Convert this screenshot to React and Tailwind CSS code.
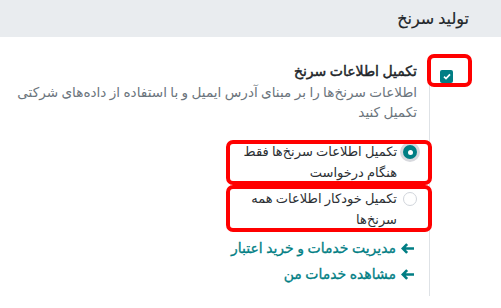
export default function App() {
  const font = "font-['Roboto','DejaVu_Sans',sans-serif]";

  const Arrow = () => (
    <svg width="13" height="11" viewBox="0 0 13 11" className="shrink-0">
      <path d="M0 5.5 L5.2 0.2 L7.1 2.1 L4.8 4.3 H13 V6.7 H4.8 L7.1 8.9 L5.2 10.8 Z" fill="#017e84" />
    </svg>
  );

  return (
    <div dir="rtl" className={`relative w-full h-[308px] bg-white overflow-hidden ${font}`}>
      {/* section header */}
      <div className="h-[37px] bg-[#e9ecef] flex items-center pr-8">
        <h2 className="text-[16px] font-medium text-[#212529] [-webkit-text-stroke:0.2px_#212529]">تولید سرنخ</h2>
      </div>

      {/* setting row */}
      <div className="flex pt-6">
        <div className="w-[71px] shrink-0 pr-[48px] pt-[9px]">
          <div className="w-[13px] h-[13px] rounded-[2px] bg-[#017e84] flex items-center justify-center">
            <svg width="8" height="7" viewBox="0 0 8 7">
              <path d="M1 3.6 L3 5.5 L7 1.3" stroke="white" strokeWidth="1.7" fill="none" />
            </svg>
          </div>
        </div>

        <div className="flex-1 border-r border-[#dee2e6] pr-3 pb-[11px]">
          <div className="text-[14px] leading-[21px] text-[#212529] [-webkit-text-stroke:0.45px_#212529]">
            تکمیل اطلاعات سرنخ
          </div>
          <div className="text-[13.6px] leading-[20px] text-[#6c757d] whitespace-nowrap">
            اطلاعات سرنخ‌ها را بر مبنای آدرس ایمیل و با استفاده از داده‌های شرکتی
            <br />
            تکمیل کنید
          </div>

          <div className="mt-[19px] flex flex-col gap-[5px]">
            <label className="flex items-start gap-[6px] text-[13px] leading-[21px] text-[#2b2f33]">
              <span className="mt-[4px] w-[14px] h-[14px] shrink-0 rounded-full bg-[#017e84] shadow-[0_0_0_3px_#d8d9de] flex items-center justify-center">
                <span className="w-[5px] h-[5px] rounded-full bg-white" />
              </span>
              <span className="whitespace-nowrap">
                تکمیل اطلاعات سرنخ‌ها فقط
                <br />
                هنگام درخواست
              </span>
            </label>
            <label className="flex items-start gap-[6px] text-[13px] leading-[21px] text-[#2b2f33]">
              <span className="mt-[4px] w-[14px] h-[14px] shrink-0 rounded-full border border-[#d1d5db] bg-white" />
              <span className="whitespace-nowrap">
                تکمیل خودکار اطلاعات همه
                <br />
                سرنخ‌ها
              </span>
            </label>
          </div>

          <div className="mt-[7px] flex flex-col gap-1 pr-[3px]">
            <a className="flex items-center gap-[5px] text-[14px] leading-[22px] text-[#017e84] [-webkit-text-stroke:0.3px_#017e84]">
              <Arrow />
              <span>مدیریت خدمات و خرید اعتبار</span>
            </a>
            <a className="flex items-center gap-[5px] text-[14px] leading-[22px] text-[#017e84] [-webkit-text-stroke:0.3px_#017e84]">
              <Arrow />
              <span>مشاهده خدمات من</span>
            </a>
          </div>
        </div>
      </div>

      {/* red annotation boxes */}
      <div className="absolute left-[427px] top-[54px] w-[45px] h-[33px] border-4 border-[#ff0000] rounded-[7px]" />
      <div className="absolute left-[226px] top-[140px] w-[206px] h-[45px] border-4 border-[#ff0000] rounded-[7px]" />
      <div className="absolute left-[226px] top-[185px] w-[206px] h-[47px] border-4 border-[#ff0000] rounded-[7px]" />
    </div>
  );
}
